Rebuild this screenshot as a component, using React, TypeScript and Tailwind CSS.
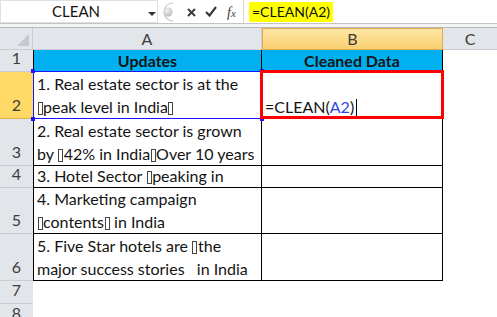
import React from "react";

const Box = () => (
  <span className="inline-block w-[5px] h-[13px] border border-[#444] align-[-2px] mx-[0.5px]" />
);

const font = { fontFamily: "Lato, 'Open Sans', sans-serif" };

function RowHead({ n, h, sel }: { n: string; h: string; sel?: boolean }) {
  return (
    <div
      className={`w-[33px] shrink-0 flex items-end justify-center pb-[1px] border-b text-[16px] text-[#3c3c3c] ${h} ${
        sel ? "bg-[#ffd966] border-[#e3b04b]" : "bg-[#e2e5e9] border-[#c9cdd3]"
      }`}
    >
      {n}
    </div>
  );
}

export default function App() {
  return (
    <div className="w-[497px] h-[317px] overflow-hidden bg-white relative" style={font}>
      {/* formula bar */}
      <div className="h-[24px] flex items-stretch border-b border-[#c4c4c4] bg-white">
        <div className="w-[158px] shrink-0 relative flex items-center justify-center text-[15px] text-[#111] border border-[#e0e0e0]">
          <span className="mr-[6px]">CLEAN</span>
          <svg className="absolute left-[147px] top-[11px]" width="8" height="4" viewBox="0 0 8 4">
            <polygon points="0,0 8,0 4,4" fill="#333" />
          </svg>
        </div>
        <div className="w-[85px] shrink-0 relative bg-white">
          <svg className="absolute left-[1px] top-[2px]" width="16" height="20" viewBox="0 0 16 20">
            <path d="M14 1 A9 9 0 0 0 14 19" fill="none" stroke="#c9c9c9" strokeWidth="1.2" />
            <defs>
              <radialGradient id="g" cx="0.4" cy="0.35" r="0.7">
                <stop offset="0" stopColor="#f4f4f4" />
                <stop offset="1" stopColor="#b8b8b8" />
              </radialGradient>
            </defs>
            <circle cx="9" cy="10" r="4.5" fill="url(#g)" />
          </svg>
          <svg className="absolute left-[29px] top-[8px]" width="9" height="9" viewBox="0 0 9 9">
            <path d="M1 1 L8 8 M8 1 L1 8" stroke="#3a3a3a" strokeWidth="2" />
          </svg>
          <svg className="absolute left-[47px] top-[6px]" width="12" height="11" viewBox="0 0 12 11">
            <path d="M1 6 L4.5 9.5 L11 1" fill="none" stroke="#3a3a3a" strokeWidth="2.2" />
          </svg>
          <span
            className="absolute left-[69px] top-[2px] text-[14px] italic text-[#3a3a3a]"
            style={{ fontFamily: "'Liberation Serif', serif" }}
          >
            f<span className="text-[11px]">x</span>
          </span>
        </div>
        <div className="flex-1 border-l border-[#d4d4d4] flex items-center pl-[5px]">
          <span className="bg-[#ffff00] h-[20px] flex items-center px-[3px] text-[14px] text-[#111]">=CLEAN(A2)</span>
        </div>
      </div>
      <div className="h-[4px] bg-[#f3f3f3] border-b border-[#b9b9b9]" />

      {/* column headers */}
      <div className="h-[22px] flex text-[16px] text-[#3c3c3c]">
        <div className="w-[33px] shrink-0 bg-[#e2e5e9] border-r border-b border-[#c9cdd3] relative">
          <svg className="absolute right-[3px] bottom-[3px]" width="12" height="12" viewBox="0 0 12 12">
            <polygon points="12,0 12,12 0,12" fill="#c5c9cf" />
          </svg>
        </div>
        <div className="w-[229px] shrink-0 bg-[#e2e5e9] border-r border-b border-[#c9cdd3] flex items-center justify-center">A</div>
        <div className="w-[181px] shrink-0 bg-gradient-to-b from-[#fde7a4] to-[#f9cf70] border border-[#e2a84a] flex items-center justify-center">B</div>
        <div className="flex-1 bg-[#e2e5e9] border-b border-[#c9cdd3] flex items-center justify-center">C</div>
      </div>

      {/* rows */}
      <div className="text-[16px] text-[#141414]">
        <div className="flex">
          <RowHead n="1" h="h-[22px]" />
          <div className="w-[229px] h-[22px] bg-[#00b0f0] border-l border-r border-b border-black flex items-center justify-center font-bold">
            Updates
          </div>
          <div className="w-[181px] h-[22px] bg-[#00b0f0] border-r border-b border-black flex items-center justify-center font-bold">
            Cleaned Data
          </div>
        </div>
        <div className="flex">
          <RowHead n="2" h="h-[47px]" sel />
          <div className="w-[229px] h-[47px] border-l border-r border-b border-black flex flex-col justify-end pl-[3px] leading-[23px] relative">
            <div>1. Real estate sector is at the</div>
            <div>
              <Box />peak level in India<Box />
            </div>
            <div className="absolute -left-px -top-px -right-px -bottom-px border border-[#1515ff] pointer-events-none" />
            <div className="absolute -left-[3px] -top-[3px] w-[4px] h-[4px] bg-[#1515ff]" />
            <div className="absolute -right-[3px] -top-[3px] w-[4px] h-[4px] bg-[#1515ff]" />
            <div className="absolute -left-[3px] -bottom-[3px] w-[4px] h-[4px] bg-[#1515ff]" />
            <div className="absolute -right-[3px] -bottom-[3px] w-[4px] h-[4px] bg-[#1515ff]" />
          </div>
          <div className="w-[181px] h-[47px] border-r border-b border-black flex flex-col justify-end pl-[3px] leading-[23px] relative">
            <div>
              =CLEAN(<span className="text-[#2f45e0]">A2</span>)
              <span className="inline-block w-px h-[17px] bg-black align-[-3px] ml-[2px]" />
            </div>
            <div className="absolute -left-[2px] -top-[2px] -right-[2px] -bottom-px border-[3px] border-[#ff0000]" />
          </div>
        </div>
        <div className="flex">
          <RowHead n="3" h="h-[47px]" />
          <div className="w-[229px] h-[47px] border-l border-r border-b border-black flex flex-col justify-end pl-[3px] leading-[23px]">
            <div>2. Real estate sector is grown</div>
            <div>
              by <Box />42% in India<Box />Over 10 years
            </div>
          </div>
          <div className="w-[181px] h-[47px] border-r border-b border-black" />
        </div>
        <div className="flex">
          <RowHead n="4" h="h-[22px]" />
          <div className="w-[229px] h-[22px] border-l border-r border-b border-black flex flex-col justify-end pl-[3px] leading-[22px]">
            <div>
              3. Hotel Sector <Box />peaking in
            </div>
          </div>
          <div className="w-[181px] h-[22px] border-r border-b border-black" />
        </div>
        <div className="flex">
          <RowHead n="5" h="h-[46px]" />
          <div className="w-[229px] h-[46px] border-l border-r border-b border-black flex flex-col justify-end pl-[3px] leading-[23px]">
            <div>4. Marketing campaign</div>
            <div>
              <Box />contents<Box /> in India
            </div>
          </div>
          <div className="w-[181px] h-[46px] border-r border-b border-black" />
        </div>
        <div className="flex">
          <RowHead n="6" h="h-[47px]" />
          <div className="w-[229px] h-[47px] border-l border-r border-b border-black flex flex-col justify-end pl-[3px] leading-[23px]">
            <div>
              5. Five Star hotels are <Box />the
            </div>
            <div className="whitespace-pre">major success stories   in India</div>
          </div>
          <div className="w-[181px] h-[47px] border-r border-b border-black" />
        </div>
        <div className="flex">
          <RowHead n="7" h="h-[23px]" />
        </div>
        <div className="flex">
          <RowHead n="8" h="h-[23px]" />
        </div>
      </div>
    </div>
  );
}
